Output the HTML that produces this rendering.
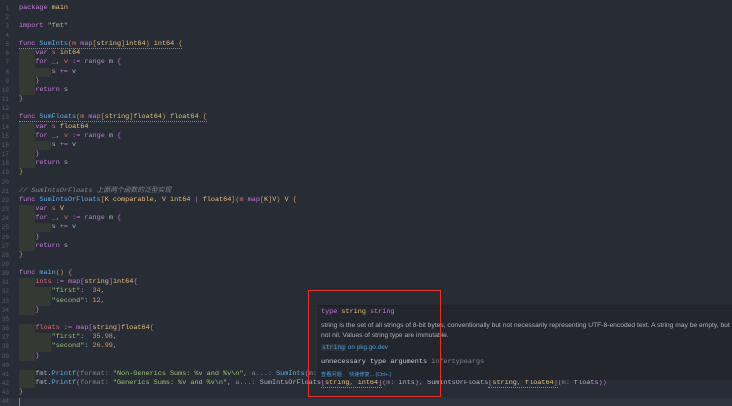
<!DOCTYPE html><html><head><meta charset="utf-8"><style>
body{margin:0;width:732px;height:406px;background:#282c34;overflow:hidden;position:relative;font-family:"Liberation Mono",monospace;font-size:6.8px;color:#abb2bf}
.l{position:absolute;left:19px;height:9px;line-height:9px;white-space:pre}
.n{position:absolute;left:0;width:9px;text-align:right;height:9px;line-height:9px;color:#565c68;font-size:6px}
.k{color:#c678dd}.f{color:#61afef}.t{color:#e5c07b}.s{color:#98c379}.d{color:#d19a66}.v{color:#e06c75}.c{color:#7f848e;font-style:italic}.p{color:#abb2bf}.h{color:#7f848e}
.g{position:absolute;background:#343a33}
.u{border-bottom:1px dotted #b5813a}
</style></head><body>
<div style="position:absolute;left:0;top:398px;width:732px;height:8px;background:#2f333d"></div>
<div style="position:absolute;left:19px;top:398px;width:1px;height:8px;background:#528bff"></div>
<div id="gg"></div>
<div id="cc"></div>
<div style="position:absolute;left:317px;top:305px;width:415px;height:74px;background:#23262c;border-top:1px solid #1c1f24;font-family:'Liberation Sans','Noto Sans CJK SC',sans-serif">
<div style="position:absolute;left:4px;top:2px;font-family:'Liberation Mono',monospace;font-size:6.8px"><span class="k">type</span> <span class="t">string</span> <span class="k">string</span></div>
<div style="position:absolute;left:4px;top:15px;width:440px;font-size:6.7px;line-height:9.5px;color:#abb2bf;white-space:nowrap">string is the set of all strings of 8-bit bytes, conventionally but not necessarily representing UTF-8-encoded text. A string may be empty, but<br>not nil. Values of string type are immutable.</div>
<div style="position:absolute;left:4px;top:38px;font-size:6.4px;color:#4d9ddb"><span style="font-family:'Liberation Mono',monospace;background:#2c313a;padding:0 1px">string</span> on pkg.go.dev</div>
<div style="position:absolute;left:4px;top:52px;font-family:'Liberation Mono',monospace;font-size:6.8px;color:#c8ccd4">unnecessary type arguments <span style="color:#7f848e">infertypeargs</span></div>
<div style="position:absolute;left:4px;top:65px;font-size:5.2px;color:#4d9ddb">查看问题 &nbsp;&nbsp;&nbsp;&nbsp;快速修复... (Ctrl+.)</div>
</div>
<div style="position:absolute;left:308px;top:290px;width:131px;height:105px;border:1.5px solid #e8312a"></div>
<script>
(function(){
var L=[
'<span class="k">package</span> <span class="t">main</span>','',
'<span class="k">import</span> <span class="s">"fmt"</span>','',
'<span class="u"><span class="k">func</span> <span class="f">SumInts</span><span class="d">(</span><span class="v">m</span> <span class="k">map</span><span class="d">[</span><span class="t">string</span><span class="d">]</span><span class="t">int64</span><span class="d">)</span> <span class="t">int64</span> <span class="d">{</span></span>',
'    <span class="k">var</span> <span class="v">s</span> <span class="t">int64</span>',
'    <span class="k">for</span> <span class="v">_</span>, <span class="v">v</span> <span class="k">:=</span> <span class="k">range</span> m <span class="k">{</span>',
'        s <span class="k">+=</span> v','    <span class="k">}</span>','    <span class="k">return</span> s','<span class="d">}</span>','',
'<span class="u"><span class="k">func</span> <span class="f">SumFloats</span><span class="d">(</span><span class="v">m</span> <span class="k">map</span><span class="d">[</span><span class="t">string</span><span class="d">]</span><span class="t">float64</span><span class="d">)</span> <span class="t">float64</span> <span class="d">{</span></span>',
'    <span class="k">var</span> <span class="v">s</span> <span class="t">float64</span>',
'    <span class="k">for</span> <span class="v">_</span>, <span class="v">v</span> <span class="k">:=</span> <span class="k">range</span> m <span class="k">{</span>',
'        s <span class="k">+=</span> v','    <span class="k">}</span>','    <span class="k">return</span> s','<span class="d">}</span>','',
'<span class="c">// SumIntsOrFloats 上面两个函数的泛型实现</span>',
'<span class="k">func</span> <span class="f">SumIntsOrFloats</span><span class="d">[</span><span class="t">K</span> <span class="t">comparable</span>, <span class="t">V</span> <span class="t">int64</span> <span class="k">|</span> <span class="t">float64</span><span class="d">]</span><span class="d">(</span><span class="v">m</span> <span class="k">map</span><span class="d">[</span><span class="t">K</span><span class="d">]</span><span class="t">V</span><span class="d">)</span> <span class="t">V</span> <span class="d">{</span>',
'    <span class="k">var</span> <span class="v">s</span> <span class="t">V</span>',
'    <span class="k">for</span> <span class="v">_</span>, <span class="v">v</span> <span class="k">:=</span> <span class="k">range</span> m <span class="k">{</span>',
'        s <span class="k">+=</span> v','    <span class="k">}</span>','    <span class="k">return</span> s','<span class="d">}</span>','',
'<span class="k">func</span> <span class="f">main</span><span class="d">()</span> <span class="d">{</span>',
'    <span class="v">ints</span> <span class="k">:=</span> <span class="k">map</span><span class="k">[</span><span class="t">string</span><span class="k">]</span><span class="t">int64</span><span class="k">{</span>',
'        <span class="s">"first"</span>:  <span class="d">34</span>,','        <span class="s">"second"</span>: <span class="d">12</span>,','    <span class="k">}</span>','',
'    <span class="v">floats</span> <span class="k">:=</span> <span class="k">map</span><span class="k">[</span><span class="t">string</span><span class="k">]</span><span class="t">float64</span><span class="k">{</span>',
'        <span class="s">"first"</span>:  <span class="d">35.98</span>,','        <span class="s">"second"</span>: <span class="d">26.99</span>,','    <span class="k">}</span>','',
'    fmt.<span class="f">Printf</span><span class="k">(</span><span class="h">format:</span> <span class="s">"Non-Generics Sums: %v and %v\\n"</span>, <span class="h">a...:</span> <span class="f">SumInts</span><span class="k">(</span><span class="h">m:</span> ints<span class="k">)</span>',
'    fmt.<span class="f">Printf</span><span class="k">(</span><span class="h">format:</span> <span class="s">"Generics Sums: %v and %v\\n"</span>, <span class="h">a...:</span> SumIntsOrFloats<span class="u"><span class="k">[</span><span class="t">string</span>, <span class="t">int64</span><span class="k">]</span></span><span class="k">(</span><span class="h">m:</span> ints<span class="k">)</span>, SumIntsOrFloats<span class="u"><span class="k">[</span><span class="t">string</span>, <span class="t">float64</span><span class="k">]</span></span><span class="k">(</span><span class="h">m:</span> floats<span class="k">))</span>',
'<span class="d">}</span>',''];
var h='',g='';
function tp(i){return (3.5+i*9.16).toFixed(2)}
for(var i=0;i<L.length;i++){h+='<div class="n" style="top:'+tp(i)+'px">'+(i+1)+'</div><div class="l" style="top:'+tp(i)+'px">'+L[i]+'</div>';}
function blk(a,b,x,w){g+='<div class="g" style="left:'+x+'px;top:'+(3.5+(a-1)*9.16)+'px;width:'+w+'px;height:'+((b-a+1)*9.16)+'px"></div>';}
[[6,10],[14,18],[23,27],[31,34],[36,39],[41,42]].forEach(function(r){blk(r[0],r[1],19,16)});
[8,16,25].forEach(function(n){blk(n,n,35,16)});
blk(32,33,35,16);blk(37,38,35,16);
document.getElementById('cc').innerHTML=h;document.getElementById('gg').innerHTML=g;
})();
</script>
</body></html>
